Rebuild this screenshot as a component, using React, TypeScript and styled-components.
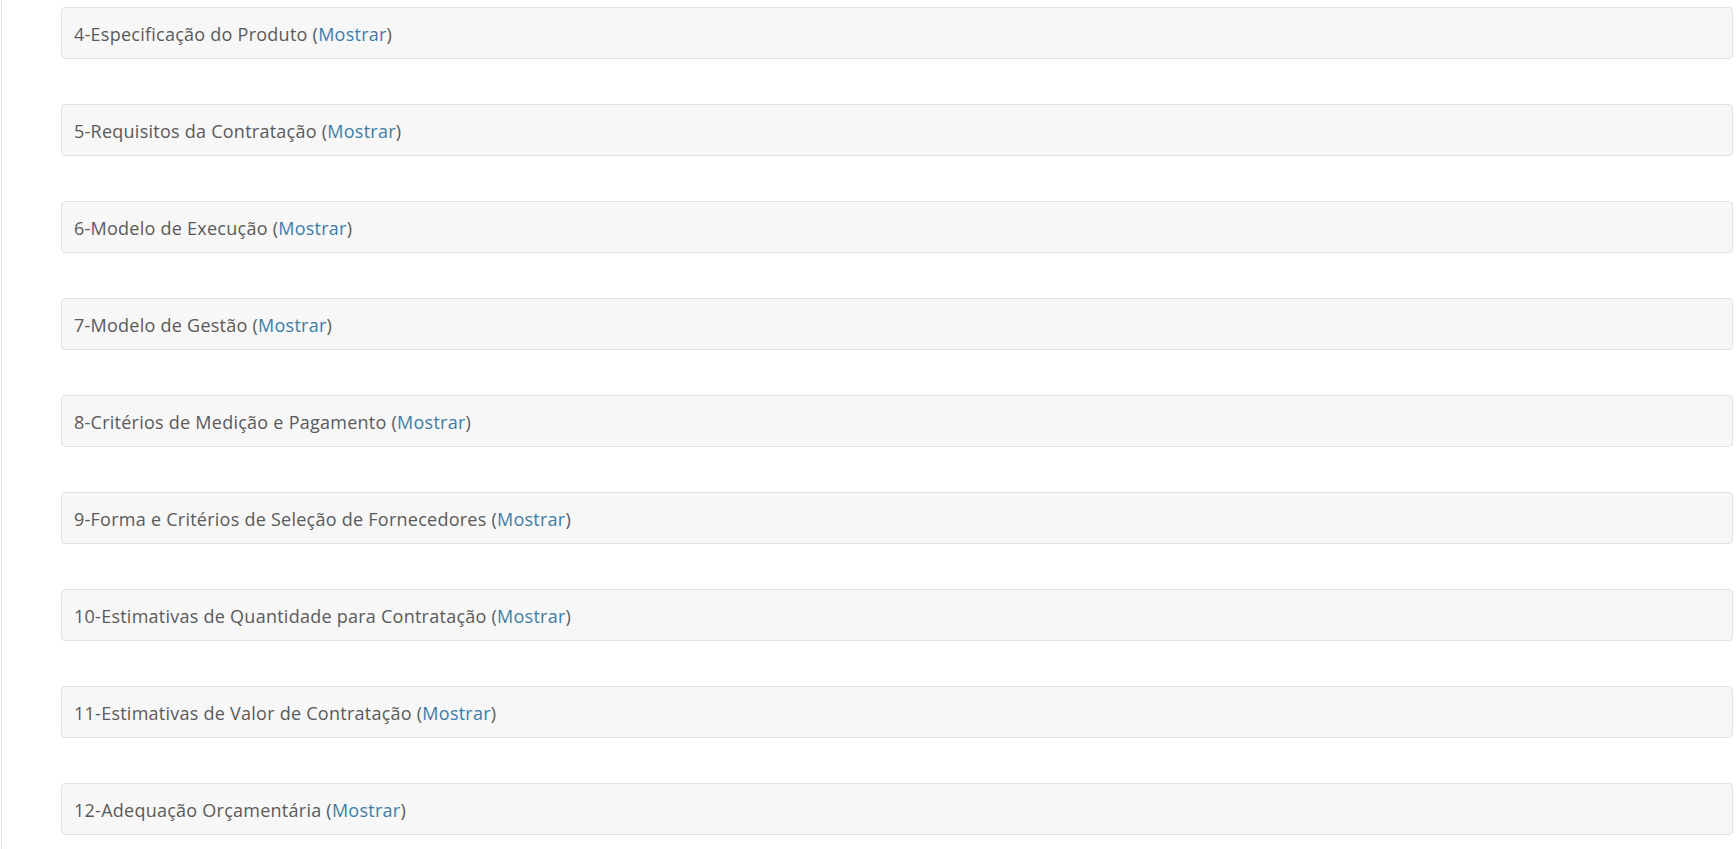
import React from "react";
import styled, { createGlobalStyle } from "styled-components";

const GlobalStyle = createGlobalStyle`
  html, body {
    margin: 0;
    padding: 0;
    background: #ffffff;
  }
  body {
    font-family: "Open Sans", "Noto Sans", Arial, sans-serif;
  }
`;

const Page = styled.div`
  margin-left: 1px;
  border-left: 1px solid #e6e6e6;
  min-height: 849px;
  box-sizing: border-box;
  padding: 7px 3px 0 59px;
  display: flex;
  flex-direction: column;
  gap: 45px;
`;

const Panel = styled.div`
  box-sizing: border-box;
  height: 52px;
  background: #f7f7f7;
  border: 1px solid #e2e2e2;
  border-radius: 4px;
  display: flex;
  align-items: center;
  padding: 2px 12px 0;
`;

const Title = styled.span`
  font-size: 18px;
  letter-spacing: 0.25px;
  color: #5a5a5a;
  white-space: nowrap;
`;

const ToggleLink = styled.a`
  color: #3d7ea6;
  text-decoration: none;
  cursor: pointer;
`;

const sections = [
  "4-Especificação do Produto",
  "5-Requisitos da Contratação",
  "6-Modelo de Execução",
  "7-Modelo de Gestão",
  "8-Critérios de Medição e Pagamento",
  "9-Forma e Critérios de Seleção de Fornecedores",
  "10-Estimativas de Quantidade para Contratação",
  "11-Estimativas de Valor de Contratação",
  "12-Adequação Orçamentária",
];

export default function App() {
  return (
    <>
      <GlobalStyle />
      <Page>
        {sections.map((s) => (
          <Panel key={s}>
            <Title>
              {s} (<ToggleLink>Mostrar</ToggleLink>)
            </Title>
          </Panel>
        ))}
      </Page>
    </>
  );
}
